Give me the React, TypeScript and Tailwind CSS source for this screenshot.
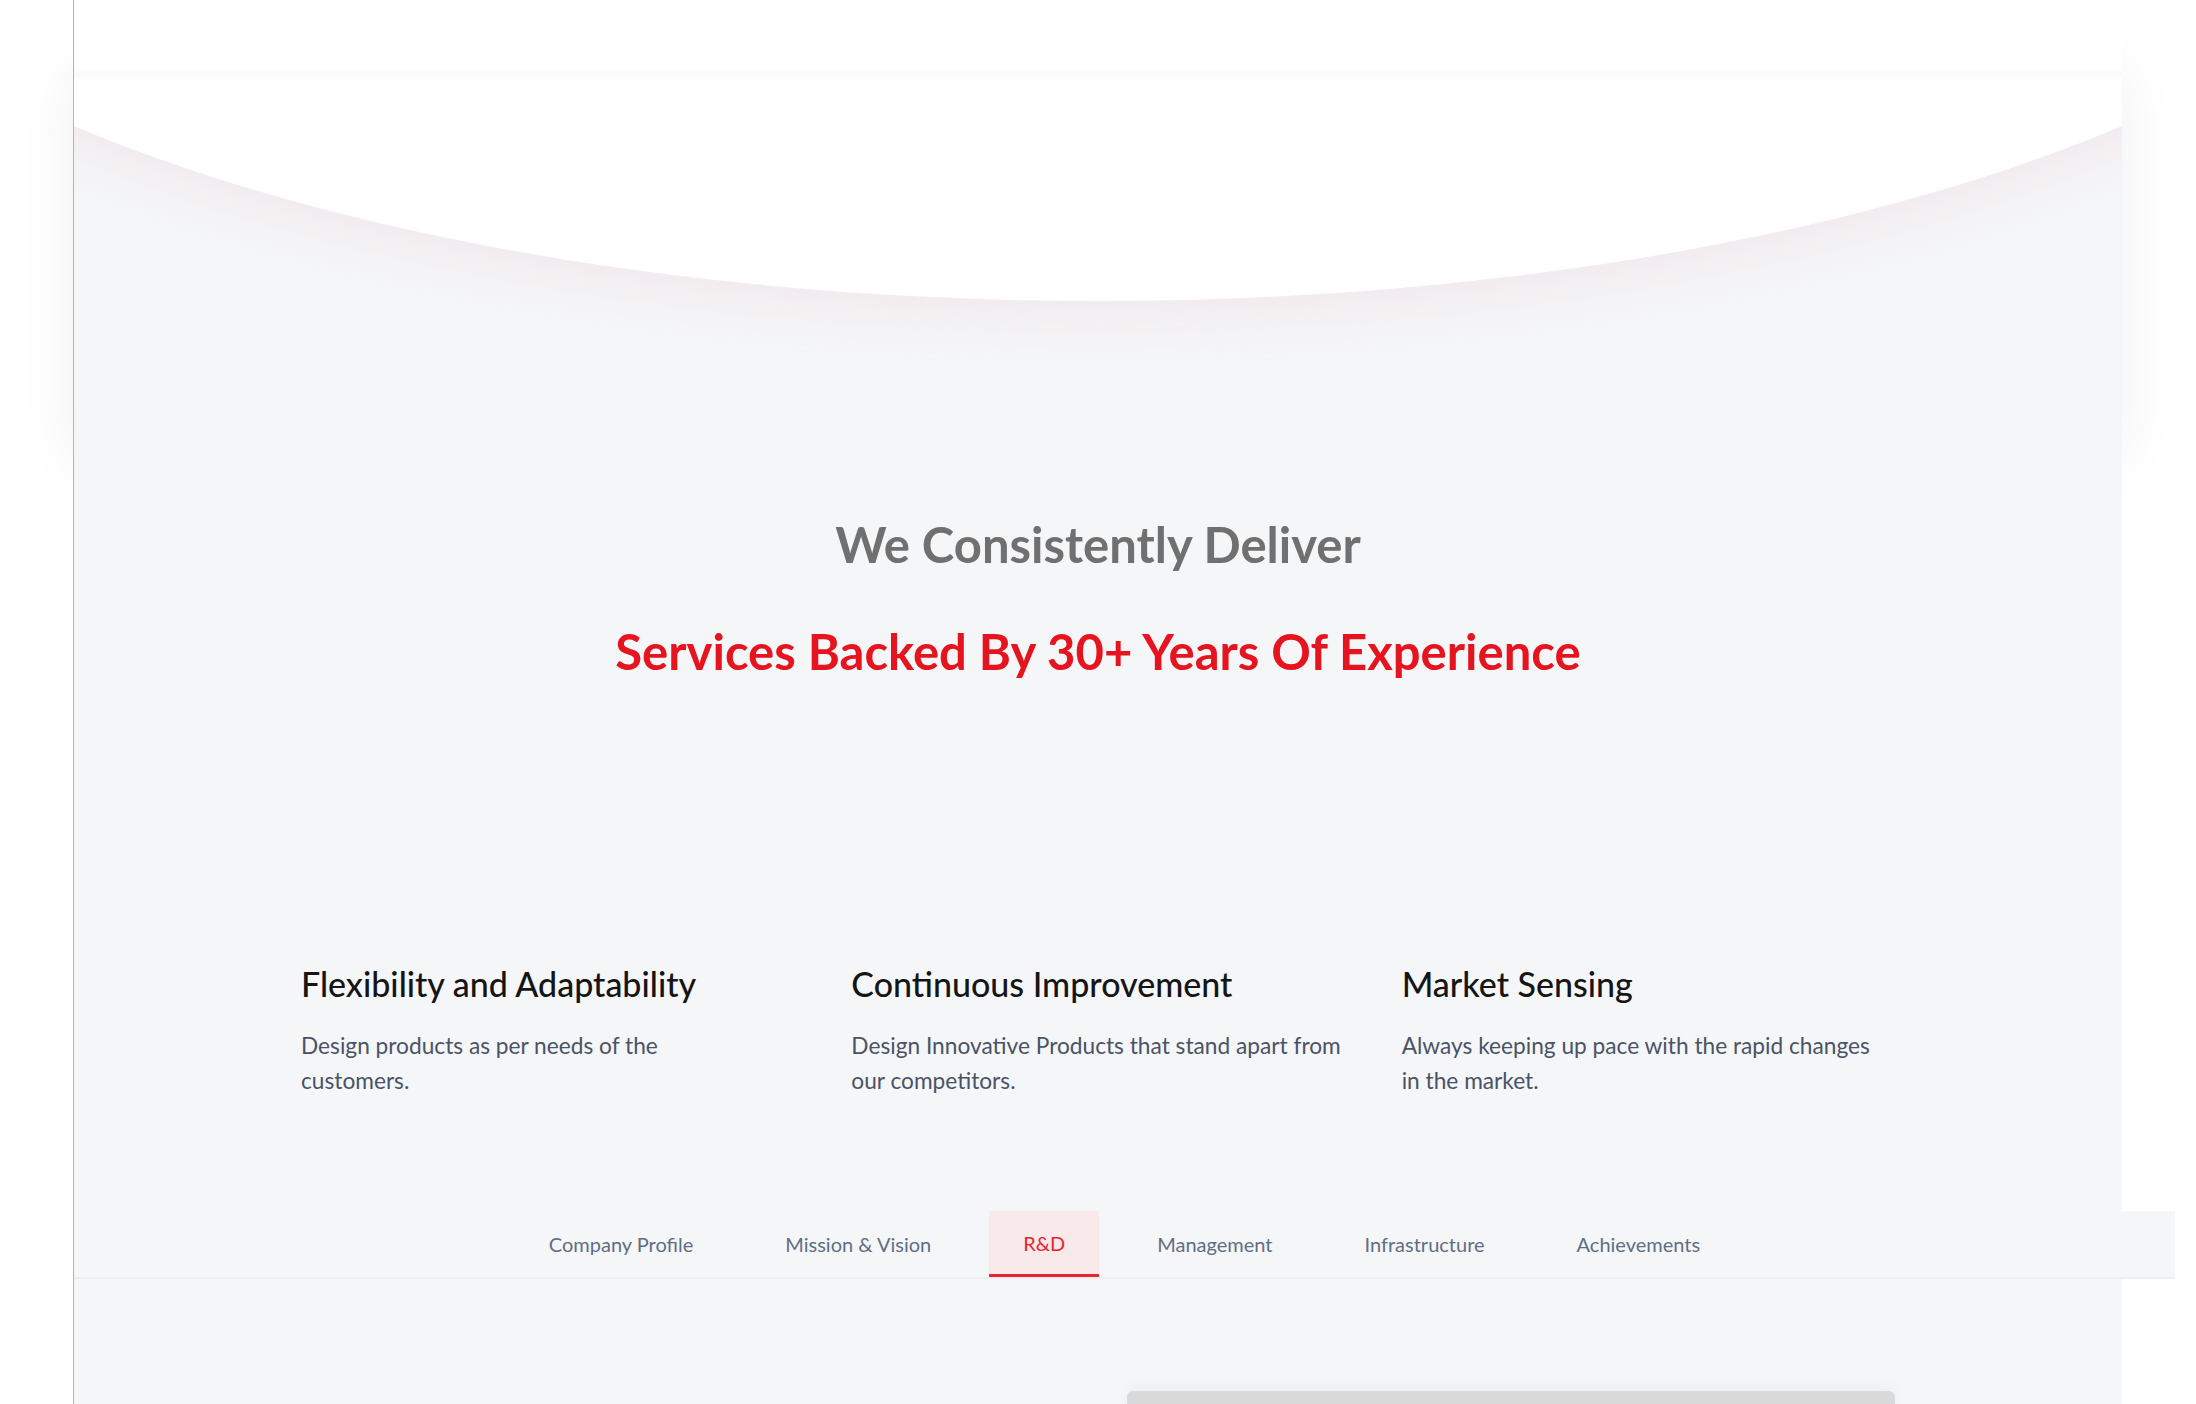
const features = [
  {
    title: "Flexibility and Adaptability",
    lines: ["Design products as per needs of the", "customers."],
  },
  {
    title: "Continuous Improvement",
    lines: ["Design Innovative Products that stand apart from", "our competitors."],
  },
  {
    title: "Market Sensing",
    lines: ["Always keeping up pace with the rapid changes", "in the market."],
  },
];

const tabs = ["Company Profile", "Mission & Vision", "R&D", "Management", "Infrastructure", "Achievements"];

export default function App() {
  const active = "R&D";

  return (
    <div className="relative h-[1404px] w-full overflow-hidden bg-white font-['Lato',sans-serif]">
      {/* soft card shadow peeking out beside the panel */}
      <div className="absolute left-[74px] top-[70px] h-[390px] w-[2048px] shadow-[0_0_60px_rgba(0,0,0,0.06)]" />

      <div className="relative flex pl-[73px]">
        <div className="w-[2049px] border-l border-[#b4b4b8] bg-[#f5f6f8]">
          {/* hero with curved white top */}
          <section className="relative overflow-hidden pt-[514px]">
            <div className="absolute left-[-376px] top-[-799px] h-[1100px] w-[2800px] rounded-[50%] bg-white shadow-[0_22px_40px_rgba(230,196,204,0.22)]" />
            <div className="absolute inset-x-0 top-[68px] h-[12px] bg-gradient-to-b from-transparent via-[#fafafa] to-transparent" />
            <div className="relative text-center">
              <h2 className="text-[49px] font-bold leading-[60px] text-[#707070]">We Consistently Deliver</h2>
              <h1 className="mt-[45px] text-[49px] font-bold leading-[64px] text-[#e5141f]">
                Services Backed By 30+ Years Of Experience
              </h1>
            </div>
          </section>

          {/* features */}
          <div className="ml-[227px] mt-[281px] grid w-[1651px] grid-cols-3">
            {features.map(f => (
              <div key={f.title}>
                <h3 className="text-[34px] font-medium leading-[40px] text-[#151515]">{f.title}</h3>
                <p className="mt-[24px] text-[22.7px] leading-[35px] text-[#4a5366]">
                  {f.lines.map((l, i) => (
                    <span key={i} className="block whitespace-nowrap">
                      {l}
                    </span>
                  ))}
                </p>
              </div>
            ))}
          </div>

          {/* tab bar */}
          <div className="mr-[-53px] mt-[113px] flex h-[68px] justify-center gap-[24px] border-b-2 border-[#eceef1] bg-[#f5f6f8]">
            {tabs.map(t => (
              <button
                key={t}
                className={
                  t === active
                    ? "h-[66px] border-b-[3px] border-[#e8262f] bg-[#f8e9eb] px-[34px] text-[20px] text-[#e8262f]"
                    : "h-[66px] px-[34px] text-[20px] text-[#5f6e85]"
                }
              >
                {t}
              </button>
            ))}
          </div>

          {/* tab content */}
          <div className="ml-[227px] grid w-[1651px] grid-cols-2 pt-[112px]">
            <div />
            <div className="h-[400px] w-[768px] rounded-t-[6px] bg-[#dadada] shadow-[0_-6px_14px_rgba(0,0,0,0.03)]" />
          </div>
        </div>
      </div>
    </div>
  );
}
